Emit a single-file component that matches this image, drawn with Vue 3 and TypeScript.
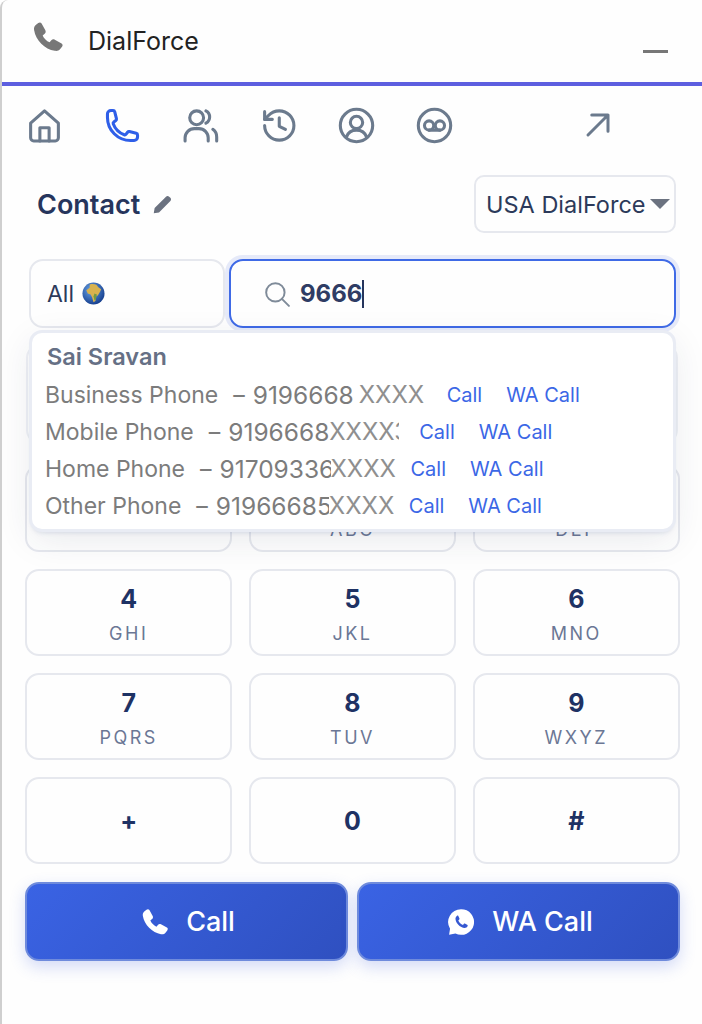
<template>
  <div class="widget">
    <header class="title-bar">
      <svg class="title-icon" viewBox="0 0 24 24"><path :d="handsetPath" fill="#777" /></svg>
      <span class="title-text">DialForce</span>
      <span class="minimize"></span>
    </header>

    <nav class="tabs">
      <svg v-for="tab in tabs" :key="tab.name" class="tab-icon" :class="{ active: tab.active }" viewBox="0 0 24 24">
        <path v-for="d in tab.paths" :key="d" :d="d" />
        <circle v-for="c in tab.circles" :key="c.join()" :cx="c[0]" :cy="c[1]" :r="c[2]" />
      </svg>
      <svg class="tab-icon expand" viewBox="0 0 24 24"><path d="M4 20 20 4M7 4h13v13" /></svg>
    </nav>

    <section class="contact-row">
      <div class="contact-title">
        Contact
        <svg class="pencil" viewBox="0 0 24 24">
          <path d="M2 22l1-6L16 3c1-1 2.600-1 3.600 0l1.400 1.400c1 1 1 2.600 0 3.600L8 21z" fill="#6b7280" />
        </svg>
      </div>
      <div class="line-select">
        USA DialForce
        <span class="triangle"></span>
      </div>
    </section>

    <section class="search-row">
      <div class="scope">
        All
        <svg class="globe" viewBox="0 0 24 24">
          <defs>
            <radialGradient id="sea" cx="40%" cy="35%" r="70%">
              <stop offset="0" stop-color="#6aa5e8" />
              <stop offset="1" stop-color="#123a8a" />
            </radialGradient>
          </defs>
          <circle cx="12" cy="12" r="11.500" fill="url(#sea)" />
          <path d="M8 2.500c2.500-.8 5-.6 7 .3l2 2.700 3 2-1 2.500-2.500 4-1.500.7-1 5-2 1.300-1.500-5-1.500-3-3-1-1.500-3.500L8 6z" fill="#d8b24e" />
          <path d="M13 12l2.500 1-1 5-1.500 1.300-1-4.300z" fill="#6f9a45" />
        </svg>
      </div>
      <div class="search-box">
        <svg class="search-icon" viewBox="0 0 24 24">
          <circle cx="10.500" cy="10.500" r="8.500" />
          <path d="M16.500 16.500 23 23" />
        </svg>
        <span class="search-value">9666</span>
        <span class="text-caret"></span>
      </div>
    </section>

    <div class="dial-display"></div>

    <section class="keypad">
      <button v-for="key in keys" :key="key.digit" class="key" :class="{ plain: !key.letters }">
        <span class="digit">{{ key.digit }}</span>
        <span v-if="key.letters" class="letters">{{ key.letters }}</span>
      </button>
    </section>

    <section class="actions">
      <button class="action">
        <svg class="action-icon" viewBox="0 0 24 24"><path :d="handsetPath" fill="#fff" /></svg>
        Call
      </button>
      <button class="action">
        <svg class="action-icon" viewBox="0 0 24 24">
          <path d="M12 1a11 11 0 0 0-9.400 16.700L1.800 23l5.400-1.200A11 11 0 1 0 12 1z" fill="#fff" />
          <path d="M8.600 6.600c-.8.600-1.500 1.700-1.300 3 .4 3.400 3.700 6.800 7.300 7.500 1.400.2 2.500-.5 3-1.400.2-.5.2-1 0-1.200l-2.300-1.200c-.3-.1-.6 0-.8.2l-.8 1c-1.800-.6-3.200-2-4-3.800l.8-.8c.2-.2.3-.5.2-.8L9.700 6.800c-.2-.4-.7-.4-1.100-.2z" fill="#3558d2" />
        </svg>
        WA Call
      </button>
    </section>

    <div class="results">
      <div class="result-name">Sai Sravan</div>
      <div v-for="row in results" :key="row.label" class="result-row">
        <span class="result-label">{{ row.label }}</span>
        <span class="result-dash">–</span>
        <span class="result-number" :style="{ width: row.width + 'px' }">{{ row.number }}</span>
        <span class="result-mask" :style="{ width: row.maskWidth + 'px', marginRight: row.gap + 'px' }">{{ row.mask }}</span>
        <a class="result-link">Call</a>
        <a class="result-link wa">WA Call</a>
      </div>
    </div>
  </div>
</template>

<script setup lang="ts">
interface Tab {
  name: string
  paths: string[]
  circles: number[][]
  active?: boolean
}

const handsetPath =
  'M7.200 1.800 10 6.900c.5 1 .3 1.900-.5 2.600L8 10.800c1 2.300 2.900 4.200 5.200 5.200l1.300-1.500c.7-.8 1.600-1 2.600-.5l5.100 2.800c.9.600 1 1.600.3 2.500l-1.500 1.900c-.9 1.100-2.300 1.500-3.900 1.200C9.600 21.200 2.800 14.400 1.600 6.900 1.300 5.300 1.700 3.900 2.800 3l1.900-1.500c.9-.7 1.900-.6 2.500.3z'

const tabs: Tab[] = [
  {
    name: 'home',
    paths: ['M3 10.500 12 2.500l9 8V20a2 2 0 0 1-2 2H5a2 2 0 0 1-2-2z', 'M9 22v-8.500h6V22'],
    circles: [],
  },
  {
    name: 'dial',
    active: true,
    paths: [
      'M2.250 6.750c0 8.284 6.716 15 15 15h2.250a2.250 2.250 0 0 0 2.250-2.250v-1.372c0-.516-.351-.966-.852-1.091l-4.423-1.106c-.44-.11-.902.055-1.173.417l-.97 1.293c-.282.376-.769.542-1.210.38a12.035 12.035 0 0 1-7.143-7.143c-.162-.441.004-.928.38-1.210l1.293-.97c.363-.271.527-.734.417-1.173L6.963 3.102a1.125 1.125 0 0 0-1.091-.852H4.500A2.250 2.250 0 0 0 2.250 4.500z',
    ],
    circles: [],
  },
  {
    name: 'contacts',
    paths: ['M2 22v-2a6 6 0 0 1 6-6h3a6 6 0 0 1 6 6v2', 'M15.500 2.500a4.500 4.500 0 0 1 0 8', 'M20 14.500a6 6 0 0 1 2.500 5V22'],
    circles: [[9.500, 7, 4.500]],
  },
  {
    name: 'history',
    paths: ['M3 12a9.500 9.500 0 1 0 9.500-9.500A10 10 0 0 0 5.500 5.500L3 8', 'M3 3v5h5', 'M12.500 7v5.500l4 2'],
    circles: [],
  },
  {
    name: 'profile',
    paths: ['M5.500 19.500c1-3 3.500-4.500 6.500-4.500s5.500 1.500 6.500 4.500'],
    circles: [[12, 12, 10.500], [12, 10, 4]],
  },
  {
    name: 'voicemail',
    paths: ['M8.500 15h7'],
    circles: [[12, 12, 10.500], [8.500, 12, 3], [15.500, 12, 3]],
  },
]

const keys = [
  { digit: '1', letters: '' },
  { digit: '2', letters: 'ABC' },
  { digit: '3', letters: 'DEF' },
  { digit: '4', letters: 'GHI' },
  { digit: '5', letters: 'JKL' },
  { digit: '6', letters: 'MNO' },
  { digit: '7', letters: 'PQRS' },
  { digit: '8', letters: 'TUV' },
  { digit: '9', letters: 'WXYZ' },
  { digit: '+', letters: '' },
  { digit: '0', letters: '' },
  { digit: '#', letters: '' },
]

const results = [
  { label: 'Business Phone', number: '9196668', width: 106, mask: 'XXXX', maskWidth: 66, gap: 22 },
  { label: 'Mobile Phone', number: '9196668', width: 101, mask: 'XXXX3', maskWidth: 70, gap: 20 },
  { label: 'Home Phone', number: '91709336', width: 111, mask: 'XXXX', maskWidth: 65, gap: 15 },
  { label: 'Other Phone', number: '91966685', width: 113, mask: 'XXXX', maskWidth: 65, gap: 15 },
]
</script>

<style>
html,
body {
  margin: 0;
  background: #fff;
}
</style>

<style scoped>
.widget {
  position: relative;
  box-sizing: border-box;
  width: 702px;
  height: 1024px;
  overflow: hidden;
  background: #fefefe;
  border-left: 2px solid #cfcfcf;
  border-top-left-radius: 8px;
  font-family: Inter, "Liberation Sans", sans-serif;
}

.title-bar {
  display: flex;
  align-items: center;
  height: 82px;
  padding: 0 34px 0 30px;
  border-bottom: 4px solid #5d5fe0;
}

.title-icon {
  width: 32px;
  height: 32px;
  margin-top: -9px;
}

.title-text {
  margin-left: 24px;
  font-size: 25px;
  color: #222;
}

.minimize {
  width: 25px;
  height: 3px;
  margin-left: auto;
  margin-top: 20px;
  background: #777;
}

.tabs {
  display: flex;
  align-items: center;
  gap: 41px;
  height: 78px;
  padding-left: 24px;
}

.tab-icon {
  width: 37px;
  height: 37px;
  fill: none;
  stroke: #6b7a8d;
  stroke-width: 2;
  stroke-linecap: round;
  stroke-linejoin: round;
}

.tab-icon.active {
  stroke: #2f5fe8;
}

.tab-icon.expand {
  width: 30px;
  height: 30px;
  margin-left: 89px;
  stroke-width: 2.400;
}

.contact-row {
  display: flex;
  align-items: center;
  justify-content: space-between;
  height: 58px;
  margin-top: 11px;
  padding: 0 26px 0 35px;
}

.contact-title {
  display: flex;
  align-items: center;
  gap: 12px;
  font-size: 27px;
  font-weight: 600;
  color: #26355c;
}

.pencil {
  width: 21px;
  height: 21px;
}

.line-select {
  display: flex;
  align-items: center;
  gap: 4px;
  box-sizing: border-box;
  width: 202px;
  height: 58px;
  padding-left: 10px;
  border: 2px solid #e6e8ee;
  border-radius: 10px;
  font-size: 23.500px;
  color: #2c3a5a;
}

.triangle {
  width: 0;
  height: 0;
  border-left: 10px solid transparent;
  border-right: 10px solid transparent;
  border-top: 10px solid #6b7280;
}

.search-row {
  display: flex;
  gap: 4px;
  height: 69px;
  margin-top: 26px;
  padding: 0 26px 0 27px;
}

.scope {
  display: flex;
  align-items: center;
  gap: 8px;
  box-sizing: border-box;
  width: 196px;
  padding-left: 16px;
  border: 2px solid #e6e8ee;
  border-radius: 14px;
  font-size: 23px;
  color: #2c3a5a;
}

.globe {
  width: 23px;
  height: 23px;
}

.search-box {
  display: flex;
  align-items: center;
  flex: 1;
  box-sizing: border-box;
  padding-left: 33px;
  border: 2px solid #3f6ae6;
  border-radius: 14px;
  box-shadow: 0 0 0 4px #e6eaf9;
}

.search-icon {
  width: 26px;
  height: 26px;
  fill: none;
  stroke: #7f8b99;
  stroke-width: 1.800;
  stroke-linecap: round;
}

.search-value {
  margin-left: 10px;
  font-size: 24px;
  font-weight: 700;
  color: #2f3c64;
}

.text-caret {
  width: 2px;
  height: 28px;
  background: #26355c;
}

.dial-display {
  box-sizing: border-box;
  height: 100px;
  margin: 16px 24px 21px;
  border: 2px solid #eef0f5;
  border-radius: 14px;
}

.keypad {
  display: grid;
  grid-template-columns: repeat(3, 1fr);
  gap: 17px 16.500px;
  padding: 0 22px 0 23px;
}

.key {
  display: flex;
  flex-direction: column;
  align-items: center;
  justify-content: center;
  gap: 9px;
  height: 87px;
  padding: 3px 0 0;
  background: #fefefe;
  border: 2px solid #e6e8ee;
  border-radius: 14px;
  font-family: inherit;
}

.key.plain {
  padding: 0;
}

.digit {
  font-size: 25px;
  font-weight: 700;
  line-height: 30px;
  color: #1e3264;
}

.letters {
  font-size: 18px;
  line-height: 22px;
  letter-spacing: 2.500px;
  color: #6b7795;
}

.actions {
  display: grid;
  grid-template-columns: 1fr 1fr;
  gap: 9px;
  margin-top: 18px;
  padding: 0 22px 0 23px;
}

.action {
  display: flex;
  align-items: center;
  justify-content: center;
  gap: 17px;
  height: 79px;
  padding: 0 0 0 3px;
  background: linear-gradient(135deg, #3a63e4, #2f50c0);
  border: 2px solid #6f8bdc;
  border-radius: 14px;
  box-shadow: 0 6px 16px rgba(58, 90, 220, 0.22);
  color: #fff;
  font-family: inherit;
  font-size: 27px;
  font-weight: 500;
}

.action-icon {
  width: 28px;
  height: 28px;
}

.results {
  position: absolute;
  top: 333px;
  left: 30px;
  box-sizing: border-box;
  width: 641px;
  height: 196px;
  padding: 10px 0 0 13px;
  background: #fff;
  border-radius: 10px;
  box-shadow: 0 0 0 3px #e9ecf4, 0 4px 4px rgba(90, 110, 160, 0.18), 0 10px 36px rgba(40, 50, 80, 0.1);
}

.result-name {
  height: 33px;
  margin-left: 2px;
  font-size: 23.500px;
  font-weight: 600;
  line-height: 28px;
  color: #667085;
}

.result-row {
  display: flex;
  align-items: center;
  height: 37px;
  font-size: 23px;
  color: #7c7c7c;
  white-space: nowrap;
}

.result-dash {
  margin: 0 8px 0 15px;
}

.result-number {
  display: inline-block;
  overflow: hidden;
  font-size: 24.500px;
}

.result-mask {
  display: inline-block;
  overflow: hidden;
  font-size: 24px;
  color: #8f8f8f;
}

.result-link {
  font-size: 20px;
  color: #3b67e6;
}

.result-link.wa {
  margin-left: 24px;
}
</style>
